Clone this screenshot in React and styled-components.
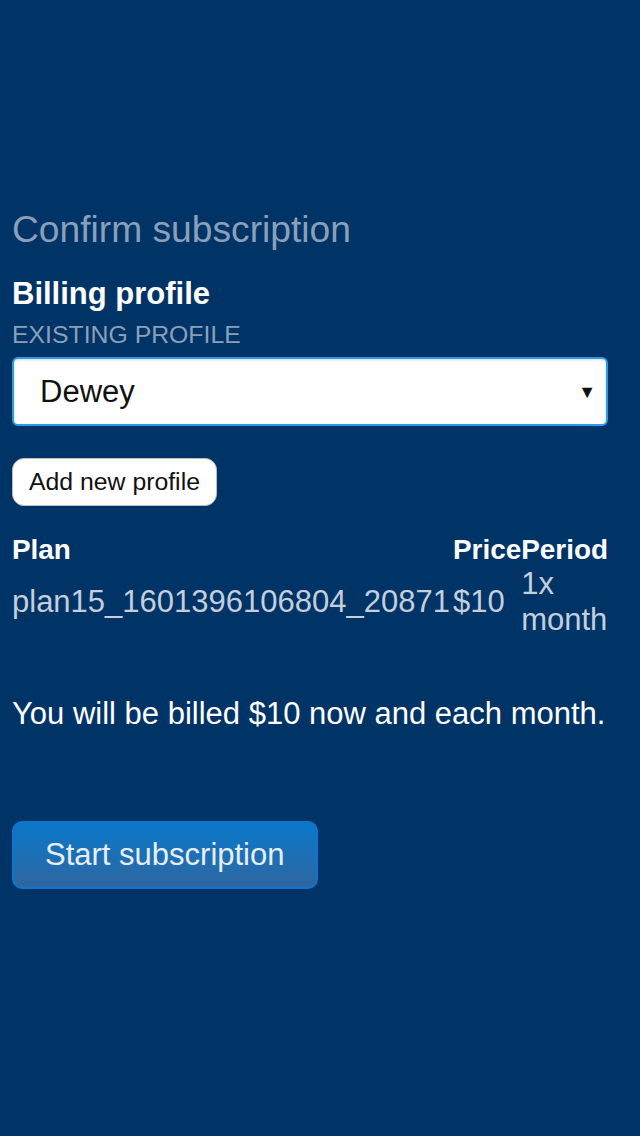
import React from 'react';
import styled, { createGlobalStyle } from 'styled-components';

const GlobalStyle = createGlobalStyle`
  html, body {
    margin: 0;
    padding: 0;
    background: #003366;
  }
  body {
    font-family: "Liberation Sans", Arial, sans-serif;
    font-size: 31px;
    color: #ffffff;
  }
`;

const Page = styled.main`
  min-height: 1136px;
  box-sizing: border-box;
  padding: 208px 32px 0 12px;
  background: #003366;
`;

const Title = styled.h1`
  margin: 0;
  font-size: 1.2em;
  font-weight: 400;
  color: #8aa0ba;
`;

const SectionTitle = styled.h2`
  margin: 25px 0 0;
  font-size: 1em;
  font-weight: 700;
  color: #ffffff;
`;

const FieldLabel = styled.label`
  display: block;
  margin-top: 9px;
  font-size: 0.8em;
  text-transform: uppercase;
  color: #8aa0ba;
`;

const SelectBox = styled.div`
  position: relative;
  margin-top: 8px;
  height: 69px;
  box-sizing: border-box;
  display: flex;
  align-items: center;
  padding: 0 26px;
  background: #ffffff;
  border: 2px solid #2a9be6;
  border-radius: 6px;
  box-shadow: inset 0 1px 3px rgba(0, 0, 0, 0.15);
  color: #111111;
  font-size: 1em;
`;

const Caret = styled.span`
  position: absolute;
  right: 10px;
  top: 50%;
  transform: translateY(-50%);
  font-size: 18px;
  color: #111111;
`;

const SecondaryButton = styled.button`
  display: block;
  margin-top: 32px;
  height: 48px;
  padding: 0 16px;
  background: #ffffff;
  border: 1px solid #bdbdbd;
  border-radius: 12px;
  font-family: inherit;
  font-size: 0.8em;
  color: #111111;
`;

const PlanTable = styled.table`
  margin-top: 28px;
  width: 100%;
  border-collapse: collapse;
  border-spacing: 0;
`;

const HeadCell = styled.th`
  padding: 0;
  text-align: left;
  font-size: 0.9em;
  font-weight: 700;
  color: #ffffff;
  white-space: ${p => (p.grow ? 'nowrap' : 'normal')};
  width: ${p => (p.grow ? '100%' : 'auto')};
`;

const Cell = styled.td`
  padding: 0;
  text-align: left;
  vertical-align: ${p => (p.top ? 'top' : 'middle')};
  color: #c3cfdd;
  font-size: 1em;
`;

const Summary = styled.p`
  margin: 58px 0 0;
  font-size: 1em;
  color: #ffffff;
`;

const PrimaryButton = styled.button`
  display: block;
  margin-top: 89px;
  height: 68px;
  padding: 0 31px;
  border: 2px solid #0f74cc;
  border-radius: 10px;
  background: linear-gradient(to bottom, #0a78ca, #2e67a0);
  font-family: inherit;
  font-size: 1em;
  color: #e6eef7;
`;

export default function App() {
  return (
    <>
      <GlobalStyle />
      <Page>
        <Title>Confirm subscription</Title>
        <SectionTitle>Billing profile</SectionTitle>
        <FieldLabel>Existing profile</FieldLabel>
        <SelectBox>
          Dewey
          <Caret>▼</Caret>
        </SelectBox>
        <SecondaryButton>Add new profile</SecondaryButton>
        <PlanTable>
          <thead>
            <tr>
              <HeadCell grow>Plan</HeadCell>
              <HeadCell>Price</HeadCell>
              <HeadCell>Period</HeadCell>
            </tr>
          </thead>
          <tbody>
            <tr>
              <Cell>plan15_1601396106804_20871</Cell>
              <Cell>$10</Cell>
              <Cell top>1x month</Cell>
            </tr>
          </tbody>
        </PlanTable>
        <Summary>You will be billed $10 now and each month.</Summary>
        <PrimaryButton>Start subscription</PrimaryButton>
      </Page>
    </>
  );
}
